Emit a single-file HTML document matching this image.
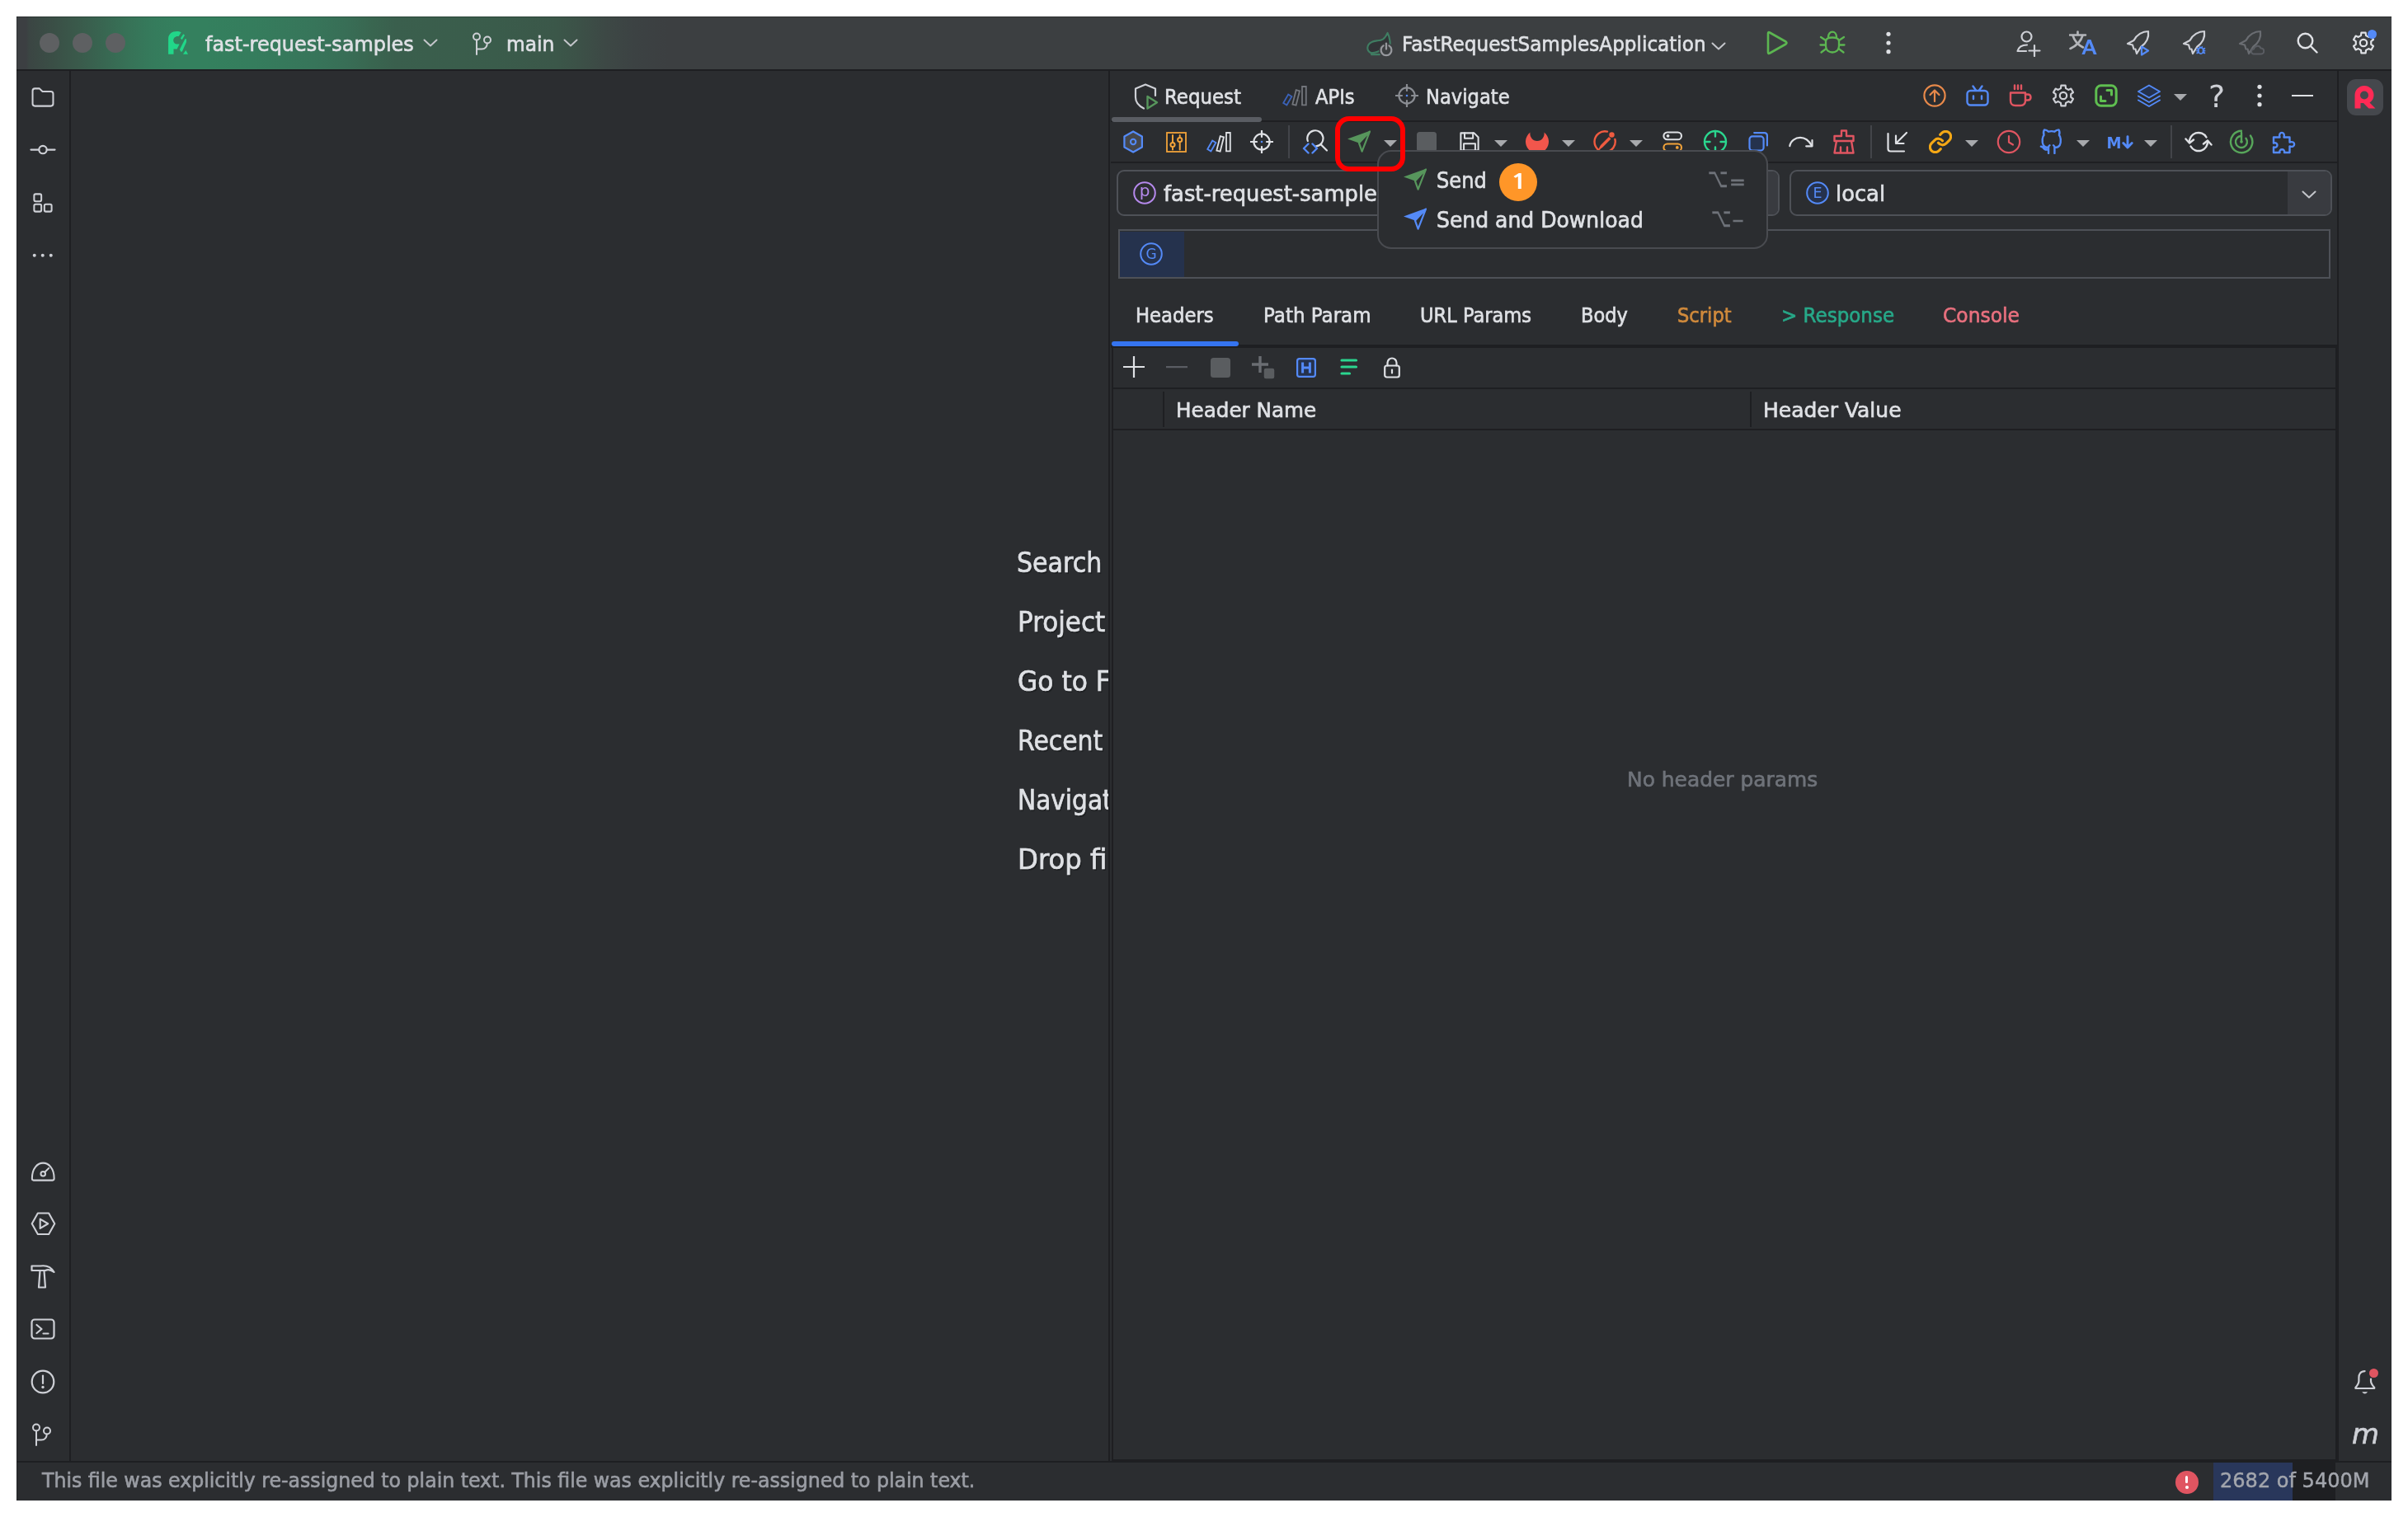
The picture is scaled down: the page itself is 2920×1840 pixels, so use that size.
<!DOCTYPE html>
<html lang="en"><head><meta charset="utf-8"><title>fast-request-samples</title>
<style>
html,body{margin:0;padding:0;background:#fff;}
body{width:2920px;height:1840px;position:relative;overflow:hidden;font-family:"DejaVu Sans","Liberation Sans",sans-serif;}
#win{will-change:transform;position:absolute;left:0;top:0;width:2920px;height:1840px;}
#win:before{content:"";position:absolute;left:20px;top:20px;width:2880px;height:1800px;background:#2b2d30;}
#win>*{position:absolute;left:0;top:0;}
#win div,#win svg,#win span{position:absolute;}
#title{left:20px;top:20px;width:2880px;height:64px;background:linear-gradient(90deg,#3c3f42 0px,#3c3f42 12px,#3b4543 15px,#3a4f46 45px,#3a5a4b 75px,#386651 105px,#377257 135px,#357b5c 165px,#34805e 195px,#34805e 230px,#357d5d 285px,#37755a 360px,#386e56 400px,#396650 430px,#3a5f4d 460px,#3a5c4b 580px,#3b5749 655px,#3c5047 685px,#3d4845 715px,#3c4243 750px,#3c3f41 790px,#3c3f41 100%);}
.t{-webkit-text-stroke:0.65px;white-space:nowrap;transform-origin:0 0;line-height:normal;}
#hints{left:86px;top:86px;width:1258px;height:1686px;overflow:hidden;}
.combo{border:2px solid #4e5157;border-radius:9px;box-sizing:border-box;overflow:hidden;}
.cbtn{right:0;top:0;height:100%;background:#393b40;}
#popup{left:1670px;top:182px;width:473.5px;height:120px;background:#2b2d30;border:2px solid #494b50;border-radius:17px;box-sizing:border-box;}
</style></head>
<body>
<div id="win">
<header id="titlebar">
<div id="title"></div>
<div style="left:20px;top:84px;width:2880px;height:2px;background:#1e1f22;"></div>
<div style="left:20px;top:20px;width:2880px;height:1px;background:rgba(0,0,0,.28);"></div>
<div style="left:20px;top:20px;width:1px;height:1800px;background:rgba(0,0,0,.22);"></div>
<div style="left:48px;top:40px;width:24px;height:24px;background:#5e6062;border-radius:50%;"></div>
<div style="left:88px;top:40px;width:24px;height:24px;background:#5e6062;border-radius:50%;"></div>
<div style="left:128px;top:40px;width:24px;height:24px;background:#5e6062;border-radius:50%;"></div>
<svg style="left:204.00px;top:38.20px;" width="24" height="28" viewBox="0 0 24 28"><g fill="#21d789" transform="translate(0 0.3)"><path d="M0.1 27.4 L0.1 9 C0.1 3 4.5 -0.2 10.5 -0.2 C12.5 -0.2 14.3 0.3 15.7 1 L12.7 5.8 C9 5 6.2 7.8 6.2 10.8 C6.2 13.5 8.2 15.3 10.6 15.3 L13.6 15.3 L10.6 21.2 L6.5 21.2 L6.5 27.4 Z"/><path d="M18.3 2.9 L20 4.4 L16.7 9.9 L14.9 8.3 Z"/><path d="M20.4 9 L22 8.9 L22 12.6 L16.9 24.2 L15.4 24.5 L13.9 21.8 Z"/><path d="M21.3 22.7 L24 27.4 L18 27.4 Z"/></g></svg>
<span class="t" style="left:248.93px;top:38.3px;font-size:25.5px;color:#dfe1e5;transform:scaleX(0.9389);">fast-request-samples</span>
<svg style="left:513.00px;top:47.00px;" width="18" height="10" viewBox="0 0 18 10"><path fill="none" stroke="#c4c6cb" stroke-width="2" stroke-linecap="round" stroke-linejoin="round"  d="M1.5 1.5 L9 8.5 L16.5 1.5"/></svg>
<svg style="left:573.00px;top:39.00px;" width="24" height="28" viewBox="0 0 24 28"><g fill="none" stroke="#ced0d6" stroke-width="2" stroke-linecap="round" stroke-linejoin="round" ><circle cx="5" cy="5.5" r="4"/><circle cx="18" cy="9.5" r="4"/><path d="M5 9.5 V27 M5 20.5 H11 Q17.5 20.5 17.8 13.5"/></g></svg>
<span class="t" style="left:614.04px;top:37.7px;font-size:25.5px;color:#dfe1e5;transform:scaleX(0.9139);">main</span>
<svg style="left:683.40px;top:47.00px;" width="18" height="10" viewBox="0 0 18 10"><path fill="none" stroke="#c4c6cb" stroke-width="2" stroke-linecap="round" stroke-linejoin="round"  d="M1.5 1.5 L9 8.5 L16.5 1.5"/></svg>
<svg style="left:1656.00px;top:37.00px;" width="34" height="32" viewBox="0 0 34 32"><g transform="translate(0.3 1)"><path fill="#313437" stroke="#3f7d62" stroke-width="2.1" stroke-linecap="round" stroke-linejoin="round"  d="M26.3 1.9 C25 5 23 8 20.7 9.6 C18 11.2 15 11.2 13.3 11.4 C10 11.8 8 12.5 6.8 13.2 C4 14.5 2.3 17 2 19.7 C1.8 22.5 3.5 25 6.5 26.3 C12 26 17 24 20 21 L29.3 15.5 C29.4 13 29.3 12 29 10.8 C28.5 7 27.5 4 26.3 1.9 Z"/><path fill="none" stroke="#3f7d62" stroke-width="2.1" stroke-linecap="round" stroke-linejoin="round"  d="M6.5 26.3 L6.8 28.1 H16.8"/></g><circle cx="25" cy="24" r="9" fill="#3c3f41"/><g fill="none" stroke="#97999e" stroke-width="2.2" stroke-linecap="round" stroke-linejoin="round"  stroke-linecap="butt"><path d="M21.6 18.4 A6.4 6.4 0 1 0 28.4 18.4"/><path d="M25 15.6 V22.6"/></g></svg>
<span class="t" style="left:1700.13px;top:38.3px;font-size:25.5px;color:#dfe1e5;transform:scaleX(0.9075);">FastRequestSamplesApplication</span>
<svg style="left:2075.00px;top:51.00px;" width="18" height="10" viewBox="0 0 18 10"><path fill="none" stroke="#c4c6cb" stroke-width="2" stroke-linecap="round" stroke-linejoin="round"  d="M1.5 1.5 L9 8.5 L16.5 1.5"/></svg>
<svg style="left:2141.00px;top:37.00px;" width="28" height="30" viewBox="0 0 28 30"><path fill="none" stroke="#5cb651" stroke-width="2.6" stroke-linecap="round" stroke-linejoin="round"  d="M3 3.5 Q3 1.5 5 2.5 L24.5 13.5 Q26.5 15 24.5 16.5 L5 27.5 Q3 28.5 3 26.5 Z"/></svg>
<svg style="left:2206.00px;top:36.00px;" width="32" height="30" viewBox="0 0 32 30"><g fill="none" stroke="#5cb651" stroke-width="2.3" stroke-linecap="round" stroke-linejoin="round" ><path d="M8 14 C8 8 24 8 24 14 V20 C24 30 8 30 8 20 Z"/><path d="M11 9 C11 0.5 21 0.5 21 9"/><path d="M8 13 L2 9 M24 13 L30 9 M8 18.5 H1.5 M24 18.5 H30.5 M8.5 23 L2.5 27.5 M23.5 23 L29.5 27.5"/></g></svg>
<svg style="left:2286.00px;top:37.00px;" width="8" height="30" viewBox="0 0 8 30"><g fill="#dfe1e5"><circle cx="4" cy="4.3" r="2.6"/><circle cx="4" cy="15" r="2.6"/><circle cx="4" cy="25.7" r="2.6"/></g></svg>
<svg style="left:2445.00px;top:37.00px;" width="30" height="32" viewBox="0 0 30 32"><g fill="none" stroke="#ced0d6" stroke-width="2.2" stroke-linecap="round" stroke-linejoin="round" ><circle cx="12.5" cy="7.5" r="6"/><path d="M1.5 25 C3 19 8 17.5 13 17.5 M1.5 25 H12"/><path d="M22 18 V31 M15.5 24.5 H28.5"/></g></svg>
<svg style="left:2509.00px;top:37.00px;" width="34" height="30" viewBox="0 0 34 30"><g fill="none" stroke="#b4b6ba" stroke-width="2.6" stroke-linecap="round" stroke-linejoin="round" ><path d="M1 5.5 H20 M10.5 1.5 V5.5 M4.5 6 C7 14 12 18 17 20.5 M16.5 6 C14 14 8 19 1.5 22"/></g><path fill="#548af7" d="M22.6 11 h3.8 l7.2 18 h-3.8 l-1.6 -4.2 h-7.6 l-1.6 4.2 h-3.6 Z M24.4 15 l-2.7 7 h5.4 Z"/></svg>
<svg style="left:2578.00px;top:36.00px;" width="30" height="32" viewBox="0 0 30 32"><path fill="none" stroke="#ced0d6" stroke-width="2.2" stroke-linecap="round" stroke-linejoin="round"  d="M27 2 C20 2 13 6 9.5 13 L2 17 L8 18.5 L9.5 23.5 M27 2 C28 9 25 16 18 21 L13 29 L11.5 23.5"/><path fill="none" stroke="#548af7" stroke-width="2.2" stroke-linecap="round" stroke-linejoin="round"  d="M19 20.5 L27 25.5 L19 30.5 Z"/></svg>
<svg style="left:2646.00px;top:36.00px;" width="30" height="32" viewBox="0 0 30 32"><path fill="none" stroke="#ced0d6" stroke-width="2.2" stroke-linecap="round" stroke-linejoin="round"  d="M27 2 C20 2 13 6 9.5 13 L2 17 L8 18.5 L9.5 23.5 M27 2 C28 9 25 16 18 21 L13 29 L11.5 23.5"/><g fill="none" stroke="#548af7" stroke-width="1.8" stroke-linecap="round" stroke-linejoin="round" ><ellipse cx="22.8" cy="25.4" rx="2.9" ry="3.7" fill="#3c3f41"/><path d="M18.2 22.8 L19.8 23.6 M18 25.6 H19.6 M18.2 28.4 L19.8 27.6 M27.4 22.8 L25.8 23.6 M27.6 25.6 H26 M27.4 28.4 L25.8 27.6 M21.3 21 L22 21.8 M24.3 21 L23.6 21.8"/></g></svg>
<svg style="left:2714.00px;top:36.00px;" width="32" height="32" viewBox="0 0 32 32"><path fill="none" stroke="#6a6d72" stroke-width="2.2" stroke-linecap="round" stroke-linejoin="round"  d="M27 2 C20 2 13 6 9.5 13 L2 17 L8 18.5 L9.5 23.5 M27 2 C28 9 25 16 18 21 L13 29 L11.5 23.5"/><path fill="none" stroke="#5a5d63" stroke-width="2" stroke-linecap="round" stroke-linejoin="round"  fill="#4a4d52" d="M19 29.5 H28 A3.5 3.5 0 0 0 27.5 22.5 A4.5 4.5 0 0 0 19 23.5 A3 3 0 0 0 19 29.5 Z"/></svg>
<svg style="left:2785.00px;top:39.00px;" width="26" height="26" viewBox="0 0 26 26"><g fill="none" stroke="#dfe1e5" stroke-width="2.4" stroke-linecap="round" stroke-linejoin="round" ><circle cx="10.5" cy="10.5" r="8.8"/><path d="M17 17 L24.5 24.5"/></g></svg>
<svg style="left:2852.00px;top:38.00px;" width="28" height="28" viewBox="0 0 28 28"><g fill="none" stroke="#dfe1e5" stroke-width="2.2" stroke-linecap="round" stroke-linejoin="round" ><path d="M17.06 5.11 L16.62 1.68 L11.38 1.68 L10.94 5.11 L7.83 6.91 L4.64 5.57 L2.02 10.11 L4.77 12.21 L4.77 15.79 L2.02 17.89 L4.64 22.43 L7.83 21.09 L10.94 22.89 L11.38 26.32 L16.62 26.32 L17.06 22.89 L20.17 21.09 L23.36 22.43 L25.98 17.89 L23.23 15.79 L23.23 12.21 L25.98 10.11 L23.36 5.57 L20.17 6.91 Z"/><circle cx="14" cy="14" r="4.2"/></g></svg>
<div style="left:2870.7px;top:36.3px;width:11px;height:11px;background:#548af7;border-radius:50%;"></div>
</header>
<nav id="left-stripe">
<div style="left:84px;top:86px;width:2px;height:1686px;background:#1e1f22;"></div>
<svg style="left:38.00px;top:106.00px;" width="28" height="24" viewBox="0 0 30 26"><path fill="none" stroke="#ced0d6" stroke-width="2.2" stroke-linecap="round" stroke-linejoin="round"  d="M1.5 4.5 Q1.5 1.5 4.5 1.5 H10.5 L14.5 5.5 H25.5 Q28.5 5.5 28.5 8.5 V21.5 Q28.5 24.5 25.5 24.5 H4.5 Q1.5 24.5 1.5 21.5 Z"/></svg>
<svg style="left:36.00px;top:175.40px;" width="32" height="13.2" viewBox="0 0 34 14"><g fill="none" stroke="#ced0d6" stroke-width="2.2" stroke-linecap="round" stroke-linejoin="round" ><circle cx="17" cy="7" r="5"/><path d="M1.5 7 H12 M22 7 H32.5"/></g></svg>
<svg style="left:40.00px;top:234.00px;" width="24" height="24" viewBox="0 0 26 26"><g fill="none" stroke="#ced0d6" stroke-width="2.2" stroke-linecap="round" stroke-linejoin="round" ><rect x="1.5" y="1.5" width="9.5" height="9.5" rx="2"/><rect x="1.5" y="15" width="9.5" height="9.5" rx="2"/><rect x="15" y="15" width="9.5" height="9.5" rx="2"/></g></svg>
<svg style="left:39.25px;top:307.25px;" width="25.5" height="5.5" viewBox="0 0 28 6"><g fill="#ced0d6"><circle cx="3" cy="3" r="2.2"/><circle cx="14" cy="3" r="2.2"/><circle cx="25" cy="3" r="2.2"/></g></svg>
<svg style="left:36.75px;top:1408.50px;" width="30.5" height="24" viewBox="0 0 32 26"><g fill="none" stroke="#ced0d6" stroke-width="2.2" stroke-linecap="round" stroke-linejoin="round" ><path d="M3.5 24.5 H28.5 Q30.5 24.5 30.5 22 C30.5 -5 1.5 -5 1.5 22 Q1.5 24.5 3.5 24.5 Z"/><circle cx="16" cy="16" r="3"/><path d="M18.2 13.8 L23.5 8.5"/></g></svg>
<svg style="left:36.50px;top:1469.75px;" width="31" height="28.5" viewBox="0 0 32 30"><g fill="none" stroke="#ced0d6" stroke-width="2.2" stroke-linecap="round" stroke-linejoin="round" ><path d="M9 1.5 H23 L30.5 15 L23 28.5 H9 L1.5 15 Z"/><path d="M12 9 L22 15 L12 21 Z"/></g></svg>
<svg style="left:37.00px;top:1533.00px;" width="30" height="30" viewBox="0 0 30 30"><g fill="none" stroke="#ced0d6" stroke-width="2.2" stroke-linecap="round" stroke-linejoin="round" ><path d="M1.5 2.5 H12 C19 1.5 25 3.5 28.5 10 C24 6.5 20 7 18 8 H1.5 Z"/><path d="M11.5 8.5 L10 28.5 H18 L16.5 8.5"/></g></svg>
<svg style="left:37.00px;top:1599.00px;" width="30" height="26" viewBox="0 0 30 26"><g fill="none" stroke="#ced0d6" stroke-width="2.2" stroke-linecap="round" stroke-linejoin="round" ><rect x="1.5" y="1.5" width="27" height="23" rx="3.5"/><path d="M7.5 8 L13.5 13 L7.5 18 M15.5 18.5 H21.5"/></g></svg>
<svg style="left:37.00px;top:1661.00px;" width="30" height="30" viewBox="0 0 30 30"><g fill="none" stroke="#ced0d6" stroke-width="2.2" stroke-linecap="round" stroke-linejoin="round" ><circle cx="15" cy="15" r="13.3"/><path d="M15 7.5 V17"/></g><circle cx="15" cy="21.5" r="1.7" fill="#ced0d6"/></svg>
<svg style="left:39.00px;top:1726.00px;" width="24" height="28" viewBox="0 0 24 28"><g fill="none" stroke="#ced0d6" stroke-width="2" stroke-linecap="round" stroke-linejoin="round" ><circle cx="5" cy="5.5" r="4"/><circle cx="18" cy="9.5" r="4"/><path d="M5 9.5 V27 M5 20.5 H11 Q17.5 20.5 17.8 13.5"/></g></svg>
</nav>
<main id="editor">
<div id="hints">
<span class="t" style="left:1147.35px;top:577.3px;font-size:33px;-webkit-text-stroke:0.7px;color:#dfe1e5;transform:scaleX(0.9118);text-shadow:1.5px 1.5px 0 rgba(20,21,23,.55)">Search Everywhere</span>
<span class="t" style="left:1148.15px;top:649.3px;font-size:33px;-webkit-text-stroke:0.7px;color:#dfe1e5;transform:scaleX(0.9398);text-shadow:1.5px 1.5px 0 rgba(20,21,23,.55)">Project View</span>
<span class="t" style="left:1148.04px;top:721.3px;font-size:33px;-webkit-text-stroke:0.7px;color:#dfe1e5;transform:scaleX(0.9493);text-shadow:1.5px 1.5px 0 rgba(20,21,23,.55)">Go to File</span>
<span class="t" style="left:1148.06px;top:793.3px;font-size:33px;-webkit-text-stroke:0.7px;color:#dfe1e5;transform:scaleX(0.9055);text-shadow:1.5px 1.5px 0 rgba(20,21,23,.55)">Recent Files</span>
<span class="t" style="left:1148.08px;top:865.3px;font-size:33px;-webkit-text-stroke:0.7px;color:#dfe1e5;transform:scaleX(0.8977);text-shadow:1.5px 1.5px 0 rgba(20,21,23,.55)">Navigation Bar</span>
<span class="t" style="left:1147.82px;top:937.3px;font-size:33px;-webkit-text-stroke:0.7px;color:#dfe1e5;transform:scaleX(0.9794);text-shadow:1.5px 1.5px 0 rgba(20,21,23,.55)">Drop files here to open them</span>
</div>
</main>
<section id="tool-window">
<div style="left:1344px;top:86px;width:2px;height:1686px;background:#1e1f22;"></div>
<svg style="left:1374.50px;top:100.50px;" width="30" height="32" viewBox="0 0 30 32"><path fill="none" stroke="#ced0d6" stroke-width="2.2" stroke-linecap="round" stroke-linejoin="round"  d="M26 15 V6.5 L14 1.5 L2 6.5 V17 C2 23 6 27.5 12 30.5"/><path fill="none" stroke="#57965c" stroke-width="2.4" stroke-linecap="round" stroke-linejoin="round"  fill="#1f3324" d="M16.5 16 L28 23.2 L16.5 30.5 Z"/></svg>
<span class="t" style="left:1412.16px;top:102.4px;font-size:25.5px;color:#dfe1e5;transform:scaleX(0.8970);">Request</span>
<svg style="left:1555.00px;top:103.50px;" width="30" height="25" viewBox="0 0 30 25"><g fill="none" stroke-width="1.8" stroke-linejoin="miter"><path stroke="#3b62b8" d="M1.2 21 L7.2 10.6 L11.4 13 L5.4 23.4 Z"/><path stroke="#73767c" d="M12.3 22.6 L16.7 5.2 L21 6.3 L16.6 23.7 Z"/><path stroke="#73767c" d="M24 1 H28.8 V23.4 H24 Z"/></g></svg>
<span class="t" style="left:1594.68px;top:102.4px;font-size:25.5px;color:#dfe1e5;transform:scaleX(0.8875);">APIs</span>
<svg style="left:1692.00px;top:102.00px;" width="28" height="28" viewBox="0 0 28 28"><g fill="none" stroke="#8a8d93" stroke-width="2.2" stroke-linecap="round" stroke-linejoin="round"  stroke-linecap="butt"><circle cx="14" cy="14" r="9.6"/><path d="M14 0.5 V8 M14 20 V27.5 M0.5 14 H8 M20 14 H27.5"/></g><circle cx="14" cy="14" r="1.3" fill="#548af7"/></svg>
<span class="t" style="left:1729.18px;top:102.4px;font-size:25.5px;color:#dfe1e5;transform:scaleX(0.8882);">Navigate</span>
<div style="left:1347px;top:146px;width:1487px;height:2px;background:#1e1f22;"></div>
<div style="left:1348px;top:142px;width:182px;height:6px;background:#5a5d63;border-radius:3px;"></div>
<svg style="left:2332.00px;top:102.00px;" width="28" height="28" viewBox="0 0 28 28"><g fill="none" stroke="#e8894a" stroke-width="2.2" stroke-linecap="round" stroke-linejoin="round" ><circle cx="14" cy="14" r="12.6"/><path d="M14 21 V8 M8.5 13 L14 7.5 L19.5 13"/></g></svg>
<svg style="left:2384.00px;top:103.00px;" width="28" height="26" viewBox="0 0 28 26"><g fill="none" stroke="#548af7" stroke-width="2.4" stroke-linecap="round" stroke-linejoin="round" ><rect x="1.5" y="7" width="25" height="17.5" rx="4"/><path d="M8.5 1.5 L12 6.5 M19.5 1.5 L16 6.5"/><path d="M9 13.5 V17 M19 13.5 V17"/></g></svg>
<svg style="left:2436.00px;top:102.00px;" width="28" height="28" viewBox="0 0 28 28"><g fill="none" stroke="#e05561" stroke-width="2.4" stroke-linecap="round" stroke-linejoin="round" ><path d="M2 10.5 H20 V20 Q20 26 14 26 H8 Q2 26 2 20 Z"/><path d="M20 12.5 H23 Q26.5 12.5 26.5 16 Q26.5 19.5 23 19.5 H20"/><path d="M7 1.5 V6 M11 1.5 V6 M15 1.5 V6"/></g></svg>
<svg style="left:2488.00px;top:102.00px;" width="28" height="28" viewBox="0 0 28 28"><g fill="none" stroke="#ced0d6" stroke-width="2.2" stroke-linecap="round" stroke-linejoin="round" ><path d="M17.06 5.11 L16.62 1.68 L11.38 1.68 L10.94 5.11 L7.83 6.91 L4.64 5.57 L2.02 10.11 L4.77 12.21 L4.77 15.79 L2.02 17.89 L4.64 22.43 L7.83 21.09 L10.94 22.89 L11.38 26.32 L16.62 26.32 L17.06 22.89 L20.17 21.09 L23.36 22.43 L25.98 17.89 L23.23 15.79 L23.23 12.21 L25.98 10.11 L23.36 5.57 L20.17 6.91 Z"/><circle cx="14" cy="14" r="4.2"/></g></svg>
<svg style="left:2540.00px;top:102.00px;" width="28" height="28" viewBox="0 0 28 28"><g fill="none" stroke="#5fbf50" stroke-width="3" stroke-linecap="round" stroke-linejoin="round" ><rect x="1.8" y="1.8" width="24.4" height="24.4" rx="6"/><path d="M15 7.5 H20.5 V13 M13 20.5 H7.5 V15"/></g></svg>
<svg style="left:2592.00px;top:102.00px;" width="28" height="28" viewBox="0 0 28 28"><g fill="none" stroke="#548af7" stroke-width="2" stroke-linecap="round" stroke-linejoin="round"  stroke-linejoin="miter"><path fill="#25324d" d="M14 1.5 L27 9 L14 16.5 L1 9 Z"/><path d="M1 14.5 L14 22 L27 14.5"/><path d="M1 19.5 L14 27 L27 19.5"/></g></svg>
<svg style="left:2636.00px;top:114.00px;" width="16" height="8" viewBox="0 0 16 8"><path fill="#a8aaad" d="M0 0 H16 L8 8 Z"/></svg>
<svg style="left:2677.00px;top:100.00px;" width="22" height="32" viewBox="0 0 22 32"><text x="11" y="29.5" text-anchor="middle" font-family="DejaVu Sans,sans-serif" font-size="38" fill="#ced0d6">?</text></svg>
<svg style="left:2736.00px;top:101.00px;" width="8" height="30" viewBox="0 0 8 30"><g fill="#dfe1e5"><circle cx="4" cy="4.3" r="2.6"/><circle cx="4" cy="15" r="2.6"/><circle cx="4" cy="25.7" r="2.6"/></g></svg>
<div style="left:2779px;top:115px;width:26px;height:2px;background:#dfe1e5;"></div>
<svg style="left:1361.85px;top:158.00px;" width="24.3" height="28" viewBox="0 0 26 30"><path fill="#45474c" stroke="#548af7" stroke-width="2.4" stroke-linejoin="round" d="M13 1.5 L24.5 8 V22 L13 28.5 L1.5 22 V8 Z"/><circle cx="13" cy="15" r="3.4" fill="none" stroke="#548af7" stroke-width="2.2"/></svg>
<svg style="left:1413.50px;top:159.50px;" width="25" height="25" viewBox="0 0 25 25"><rect x="1" y="1" width="23" height="23" fill="#26282b" stroke="#f2a33a" stroke-width="1.8"/><g fill="none" stroke="#f2a33a" stroke-width="2" stroke-linecap="round" stroke-linejoin="round" ><path d="M8 4 V12.5 M8 18.5 V21.5 M16.7 4 V6.5 M16.7 12.5 V21.5"/><circle cx="8" cy="15.5" r="2.6"/><circle cx="16.7" cy="9.5" r="2.6"/></g></svg>
<svg style="left:1463.00px;top:159.50px;" width="30" height="25" viewBox="0 0 30 25"><g fill="none" stroke-width="1.8" stroke-linejoin="miter"><path stroke="#548af7" d="M1.2 21 L7.2 10.6 L11.4 13 L5.4 23.4 Z"/><path stroke="#dfe1e5" d="M12.3 22.6 L16.7 5.2 L21 6.3 L16.6 23.7 Z"/><path stroke="#dfe1e5" d="M24 1 H28.8 V23.4 H24 Z"/></g></svg>
<svg style="left:1516.00px;top:158.00px;" width="28" height="28" viewBox="0 0 28 28"><g fill="none" stroke="#dfe1e5" stroke-width="2.2" stroke-linecap="round" stroke-linejoin="round"  stroke-linecap="butt"><circle cx="14" cy="14" r="9.6"/><path d="M14 0.5 V8 M14 20 V27.5 M0.5 14 H8 M20 14 H27.5"/></g><circle cx="14" cy="14" r="1.3" fill="#548af7"/></svg>
<svg style="left:1579.00px;top:157.00px;" width="32" height="30" viewBox="0 0 32 30"><g fill="none" stroke="#dfe1e5" stroke-width="2.2" stroke-linecap="round" stroke-linejoin="round" ><path d="M6.8 14 A9.6 9.6 0 1 1 17 20.4"/><path d="M22.5 18 L30 25.5"/></g><g fill="none" stroke="#548af7" stroke-width="2.4" stroke-linecap="round" stroke-linejoin="round"  stroke-linejoin="miter" stroke-linecap="butt"><path d="M7.5 17.5 L2 23 L7.5 28.5"/><path d="M12.5 17.5 L18 23 L12.5 28.5"/></g></svg>
<svg style="left:1634.00px;top:158.00px;" width="28" height="28" viewBox="0 0 28 28"><path fill="#57965c" d="M27.7 0.4 L0 10.4 L14 15.6 Z"/><path fill="none" stroke="#57965c" stroke-width="2.2" stroke-linecap="round" stroke-linejoin="round"  stroke-linejoin="miter" d="M27 1.6 L14 15.6 L17.6 25.6 Z"/></svg>
<svg style="left:1718.00px;top:160.00px;" width="24" height="24" viewBox="0 0 24 24"><rect width="24" height="24" rx="3.5" fill="#5a5d60"/></svg>
<svg style="left:1770.00px;top:160.00px;" width="24" height="24" viewBox="0 0 26 26"><g fill="none" stroke="#dfe1e5" stroke-width="2.2" stroke-linecap="round" stroke-linejoin="round"  stroke-linejoin="miter"><path d="M1.5 1.5 H19 L24.5 7 V24.5 H1.5 Z"/><path d="M6.5 1.5 V8.5 H17.5 V1.5"/><path d="M5.5 24.5 V15.5 H20.5 V24.5"/></g></svg>
<svg style="left:1850.00px;top:158.00px;" width="28" height="28" viewBox="0 0 28 28"><path fill="#f2564c" d="M5.6 2.6 A14 14 0 1 0 22.4 2.6 A8.6 8.6 0 1 1 5.6 2.6 Z"/></svg>
<svg style="left:1932.00px;top:158.00px;" width="28" height="28" viewBox="0 0 28 28"><g fill="none" stroke="#ef5b40" stroke-width="2.4" stroke-linecap="round" stroke-linejoin="round" ><path d="M17 1.6 A12.6 12.6 0 1 0 26.4 11"/></g><path fill="#ef5b40" d="M5 25.5 L9 18 L19 8 L21.5 10.5 L11.5 20.5 Z"/><circle cx="22.5" cy="5.5" r="3.2" fill="#ef5b40"/></svg>
<svg style="left:2015.80px;top:158.85px;" width="24.4" height="26.3" viewBox="0 0 26 28"><g fill="none" stroke="#dfe1e5" stroke-width="2.2" stroke-linecap="round" stroke-linejoin="round" ><rect x="1.5" y="1.5" width="23" height="9.5" rx="4.75"/></g><circle cx="7" cy="6.2" r="2" fill="#dfe1e5"/><g fill="none" stroke="#f2a33a" stroke-width="2.2" stroke-linecap="round" stroke-linejoin="round" ><rect x="1.5" y="16.5" width="23" height="9.5" rx="4.75"/></g><circle cx="19" cy="21.2" r="2" fill="#f2a33a"/></svg>
<svg style="left:2065.00px;top:157.00px;" width="30" height="30" viewBox="0 0 30 30"><g fill="none" stroke="#2bd68f" stroke-width="2.4" stroke-linecap="round" stroke-linejoin="round"  stroke-linecap="butt"><circle cx="15" cy="15" r="13"/><path d="M15 2 V8.5 M15 21.5 V28 M2 15 H8.5 M21.5 15 H28"/></g></svg>
<svg style="left:2120.00px;top:160.00px;" width="24" height="24" viewBox="0 0 24 24"><g fill="none" stroke="#548af7" stroke-width="2.2" stroke-linecap="round" stroke-linejoin="round" ><path d="M7.2 1.1 H19.4 Q22.9 1.1 22.9 4.6 V16.4"/><rect x="1.5" y="5.4" width="17.1" height="17.1" rx="3.6" fill="#25324d"/></g></svg>
<svg style="left:2169.00px;top:162.00px;" width="30" height="20" viewBox="0 0 30 20"><g fill="none" stroke="#dfe1e5" stroke-width="2.2" stroke-linecap="round" stroke-linejoin="round" ><path d="M1.3 15.2 C2.2 8.5 8.5 4.9 14 4.9 C19.5 4.9 24.5 8.5 28 14.8"/><path d="M28.5 8.2 V15.3 H21.2"/></g></svg>
<svg style="left:2223.00px;top:157.00px;" width="26" height="30" viewBox="0 0 26 30"><g fill="none" stroke="#e05561" stroke-width="2.4" stroke-linecap="round" stroke-linejoin="round"  stroke-linejoin="miter"><path d="M10 1.5 H16 V8 H24.5 V14 H1.5 V8 H10 Z"/><path d="M4 14 L1.5 28.5 H24.5 L22 14"/><path d="M9 28 V21.5 M17 28 V21.5"/></g></svg>
<svg style="left:2288.00px;top:159.00px;" width="26" height="26" viewBox="0 0 26 26"><g fill="none" stroke="#dfe1e5" stroke-width="2.2" stroke-linecap="round" stroke-linejoin="round" ><path d="M1.5 3 V21.5 Q1.5 24.5 4.5 24.5 H21"/><path d="M24 2 L11 15 M11 5.5 V15 H20.5"/></g></svg>
<svg style="left:2339.00px;top:158.00px;" width="28" height="28" viewBox="1 1 22 22"><g fill="none" stroke="#f5a815" stroke-width="2.45" stroke-linecap="round" stroke-linejoin="round" ><path d="M10 13a5 5 0 0 0 7.54.54l3-3a5 5 0 0 0-7.07-7.07l-1.72 1.71"/><path d="M14 11a5 5 0 0 0-7.54-.54l-3 3a5 5 0 0 0 7.07 7.07l1.71-1.71"/></g></svg>
<svg style="left:2421.00px;top:157.00px;" width="30" height="30" viewBox="0 0 30 30"><g fill="none" stroke="#e05561" stroke-width="2.2" stroke-linecap="round" stroke-linejoin="round" ><circle cx="15" cy="15" r="13.2"/><path d="M15 8 V15.5 L20 18.5"/></g></svg>
<svg style="left:2473.25px;top:156.35px;" width="29.5" height="31.3" viewBox="0 0 32 34"><path fill="none" stroke="#548af7" stroke-width="2.6" stroke-linecap="round" stroke-linejoin="round"  d="M12 32.5 V25 C5 25 3.5 20 4 14 C4.2 11 5 9.5 6 8.5 C5 5.5 5.5 3 6.5 1.5 C9 1.5 11 3 12 4 C14.5 3.3 17.5 3.3 20 4 C21 3 23 1.5 25.5 1.5 C26.5 3 27 5.5 26 8.5 C27 9.5 27.8 11 28 14 C28.5 20 27 25 20 25 V32.5 M12 27.5 C8 28.5 6 27 4.5 24.5 L2 23.5 M12 25 C12 23.5 12.5 22.5 13.5 22 M20 25 C20 23.5 19.5 22.5 18.5 22"/></svg>
<svg style="left:2553.00px;top:162.00px;" width="34" height="20" viewBox="0 0 34 20"><text x="1.6" y="17.9" font-family="DejaVu Sans,sans-serif" font-weight="bold" font-size="19.6" fill="#548af7" textLength="18" lengthAdjust="spacingAndGlyphs">M</text><path fill="none" stroke="#548af7" stroke-width="2.9" stroke-linecap="round" stroke-linejoin="round"  stroke-linecap="butt" stroke-linejoin="miter" d="M27 3.6 V16.5 M21.8 11.6 L27 17 L32.2 11.6"/></svg>
<svg style="left:2649.00px;top:158.00px;" width="34" height="28" viewBox="0 0 34 28"><g fill="none" stroke="#dfe1e5" stroke-width="2.4" stroke-linecap="round" stroke-linejoin="round" ><path d="M6 15 A11 11 0 0 1 26.5 8.5"/><path d="M28 13 A11 11 0 0 1 7.5 19.5"/><path d="M1.5 10.5 L6 15.5 L11 11.5"/><path d="M23 16.5 L28 12.5 L32.5 17.5"/></g></svg>
<svg style="left:2703.00px;top:157.00px;" width="30" height="30" viewBox="0 0 30 30"><g fill="none" stroke="#57a65a" stroke-width="2.4" stroke-linecap="round" stroke-linejoin="round" ><path d="M15 1.8 A13.2 13.2 0 1 0 26 7.5"/><path d="M15 8 A7 7 0 1 0 20.5 10.7"/><path d="M15 4 V15"/></g><circle cx="15" cy="15" r="1.8" fill="#57a65a"/></svg>
<svg style="left:2755.00px;top:157.00px;" width="30" height="30" viewBox="0 0 30 30"><path fill="none" stroke="#548af7" stroke-width="2.4" stroke-linecap="round" stroke-linejoin="round"  d="M2 9.5 H9.5 C7 2 17 2 14.5 9.5 H21.5 V15.5 C29 13 29 23 21.5 20.5 V28 H15 C16.5 23 8 23 9.5 28 H2 V21.5 C8 23.5 8 14.5 2 16.5 Z"/></svg>
<svg style="left:1678.00px;top:170.00px;" width="16" height="8" viewBox="0 0 16 8"><path fill="#a8aaad" d="M0 0 H16 L8 8 Z"/></svg>
<svg style="left:1812.00px;top:170.00px;" width="16" height="8" viewBox="0 0 16 8"><path fill="#a8aaad" d="M0 0 H16 L8 8 Z"/></svg>
<svg style="left:1894.00px;top:170.00px;" width="16" height="8" viewBox="0 0 16 8"><path fill="#a8aaad" d="M0 0 H16 L8 8 Z"/></svg>
<svg style="left:1976.00px;top:170.00px;" width="16" height="8" viewBox="0 0 16 8"><path fill="#a8aaad" d="M0 0 H16 L8 8 Z"/></svg>
<svg style="left:2383.00px;top:170.00px;" width="16" height="8" viewBox="0 0 16 8"><path fill="#a8aaad" d="M0 0 H16 L8 8 Z"/></svg>
<svg style="left:2518.00px;top:170.00px;" width="16" height="8" viewBox="0 0 16 8"><path fill="#a8aaad" d="M0 0 H16 L8 8 Z"/></svg>
<svg style="left:2600.00px;top:170.00px;" width="16" height="8" viewBox="0 0 16 8"><path fill="#a8aaad" d="M0 0 H16 L8 8 Z"/></svg>
<div style="left:1562px;top:152px;width:2px;height:40px;background:#43454a;"></div>
<div style="left:2268px;top:152px;width:2px;height:40px;background:#43454a;"></div>
<div style="left:2632px;top:152px;width:2px;height:40px;background:#43454a;"></div>
<div style="left:1347px;top:196px;width:1487px;height:2px;background:#1e1f22;"></div>
<div class="combo" style="left:1354px;top:206px;width:804px;height:55.5px;"><div class="cbtn" style="width:52px"></div></div>
<svg style="left:1374.00px;top:220.00px;" width="28" height="28" viewBox="0 0 28 28"><circle cx="14" cy="14" r="12.8" fill="none" stroke="#b589ec" stroke-width="2"/><text x="14" y="18.3" text-anchor="middle" font-family="DejaVu Sans,sans-serif" font-size="20" fill="#b589ec">p</text></svg>
<span class="t" style="left:1410.92px;top:219px;font-size:27px;color:#dfe1e5;transform:scaleX(0.9555);">fast-request-samples</span>
<div class="combo" style="left:2170px;top:206px;width:658px;height:55.5px;"><div class="cbtn" style="width:52px"></div></div>
<svg style="left:2190.00px;top:220.00px;" width="28" height="28" viewBox="0 0 28 28"><circle cx="14" cy="14" r="12.8" fill="#25324d" stroke="#548af7" stroke-width="2"/><text x="14" y="20.2" text-anchor="middle" font-family="DejaVu Sans,sans-serif" font-size="17.5" fill="#548af7">E</text></svg>
<span class="t" style="left:2225.51px;top:218.8px;font-size:27px;color:#dfe1e5;transform:scaleX(0.9543);">local</span>
<svg style="left:2791.00px;top:231.00px;" width="18" height="10" viewBox="0 0 18 10"><path fill="none" stroke="#c4c6cb" stroke-width="2" stroke-linecap="round" stroke-linejoin="round"  d="M1.5 1.5 L9 8.5 L16.5 1.5"/></svg>
<div style="left:1356px;top:278px;width:1470px;height:59.5px;border:2px solid #4e5157;box-sizing:border-box;"></div>
<div style="left:1358px;top:280.5px;width:78px;height:55px;background:#25324d;"></div>
<svg style="left:1382.00px;top:294.00px;" width="28" height="28" viewBox="0 0 28 28"><circle cx="14" cy="14" r="12.8" fill="none" stroke="#548af7" stroke-width="2"/><text x="14" y="20.2" text-anchor="middle" font-family="DejaVu Sans,sans-serif" font-size="17" fill="#548af7">G</text></svg>
<span class="t" style="left:1377.27px;top:366.5px;font-size:25.5px;color:#dfe1e5;transform:scaleX(0.8912);">Headers</span>
<span class="t" style="left:1531.65px;top:366.5px;font-size:25.5px;color:#dfe1e5;transform:scaleX(0.9009);">Path Param</span>
<span class="t" style="left:1721.91px;top:366.5px;font-size:25.5px;color:#dfe1e5;transform:scaleX(0.8841);">URL Params</span>
<span class="t" style="left:1917.39px;top:366.5px;font-size:25.5px;color:#dfe1e5;transform:scaleX(0.8844);">Body</span>
<span class="t" style="left:2033.95px;top:366.5px;font-size:25.5px;color:#d08a3c;transform:scaleX(0.8874);">Script</span>
<span class="t" style="left:2160.02px;top:366.5px;font-size:25.5px;color:#27a888;transform:scaleX(0.9019);">&gt; Response</span>
<span class="t" style="left:2356.02px;top:366.5px;font-size:25.5px;color:#e8707e;transform:scaleX(0.9173);">Console</span>
<div style="left:1347px;top:418px;width:1487px;height:4px;background:#1e1f22;"></div>
<div style="left:1348px;top:414px;width:154px;height:6px;background:#3574f0;border-radius:3px;"></div>
<svg style="left:1362.00px;top:432.00px;" width="26" height="26" viewBox="0 0 26 26"><path fill="none" stroke="#dfe1e5" stroke-width="2.2" stroke-linecap="round" stroke-linejoin="round"  stroke-linecap="butt" d="M13 0 V26 M0 13 H26"/></svg>
<svg style="left:1414.00px;top:443.00px;" width="26" height="4" viewBox="0 0 26 4"><rect y="1" width="26" height="2.2" fill="#5a5d63"/></svg>
<svg style="left:1468.00px;top:434.00px;" width="24" height="24" viewBox="0 0 24 24"><rect width="24" height="24" rx="3.5" fill="#5a5d60"/></svg>
<svg style="left:1518.00px;top:432.00px;" width="28" height="28" viewBox="0 0 28 28"><path fill="none" stroke="#6a6d72" stroke-width="3.4" d="M10 0 V20 M0 10 H20"/><rect x="14" y="14" width="14" height="14" rx="3" fill="#5a5d60" stroke="#2b2d30" stroke-width="1.5"/></svg>
<svg style="left:1572.00px;top:434.00px;" width="24" height="24" viewBox="0 0 24 24"><rect x="1.1" y="1.1" width="21.8" height="21.8" rx="2.6" fill="#25324d" stroke="#548af7" stroke-width="2.2"/><path fill="none" stroke="#548af7" stroke-width="3" d="M7.6 5.5 V18.5 M16.4 5.5 V18.5 M7.6 12 H16.4"/></svg>
<svg style="left:1625.00px;top:435.30px;" width="22" height="20" viewBox="0 0 22 20"><g stroke="#2bd68f" stroke-width="3.2" stroke-linecap="round"><path d="M2 2 H19.5 M2 10 H19.5 M2 18 H11.5"/></g></svg>
<svg style="left:1677.00px;top:433.00px;" width="22" height="26" viewBox="0 0 22 26"><g fill="none" stroke="#dfe1e5" stroke-width="2.2" stroke-linecap="round" stroke-linejoin="round" ><rect x="2.2" y="10.5" width="17.6" height="14" rx="2.5"/><path d="M5.5 10.5 V7 A5.5 5.5 0 0 1 16.5 7 V10.5"/><path d="M11 15.5 V19.5"/></g></svg>
<div style="left:1348px;top:421px;width:2px;height:1351px;background:#1e1f22;"></div>
<div style="left:1348px;top:1770px;width:1486px;height:2px;background:#1e1f22;"></div>
<div style="left:1350px;top:470px;width:1484px;height:2px;background:#1e1f22;"></div>
<div style="left:1410px;top:475px;width:2px;height:43px;background:#1e1f22;"></div>
<div style="left:2122px;top:475px;width:2px;height:43px;background:#1e1f22;"></div>
<span class="t" style="left:1425.68px;top:482.2px;font-size:25.5px;color:#dfe1e5;transform:scaleX(0.9663);">Header Name</span>
<span class="t" style="left:2137.65px;top:482.2px;font-size:25.5px;color:#dfe1e5;transform:scaleX(0.9797);">Header Value</span>
<div style="left:1350px;top:520px;width:1484px;height:2px;background:#1e1f22;"></div>
<span class="t" style="left:1973.46px;top:930px;font-size:25.5px;color:#6f737a;transform:scaleX(0.9770);">No header params</span>
<div style="left:2834px;top:86px;width:2px;height:1686px;background:#1e1f22;"></div>
<div style="left:2832px;top:420px;width:2px;height:1352px;background:#1e1f22;"></div>
</section>
<aside id="right-stripe">
<div style="left:2846px;top:96px;width:44px;height:44px;background:#45484d;border-radius:11px;"></div>
<svg style="left:2855.00px;top:104.00px;" width="26" height="28" viewBox="0 0 26 28"><path fill="#ff2a55" fill-rule="evenodd" d="M0.5 27.5 V11.5 A11.5 11.5 0 0 1 23.5 11.5 C23.5 15.5 21.5 18.5 18.5 20.5 L25.5 27.5 H17.5 L11 21 L7.5 21 V27.5 Z M12 6.5 A5 5 0 1 0 12 16.5 A5 5 0 1 0 12 6.5 Z"/></svg>
<svg style="left:2855.30px;top:1662.00px;" width="26" height="30" viewBox="0 0 26 30"><g fill="none" stroke="#ced0d6" stroke-width="2.2" stroke-linecap="round" stroke-linejoin="round" ><path d="M12.6 1.1 C7.5 1.1 5.4 5 5.4 9 V13 C5.4 16 3.5 18.5 1.4 21 V22 H24.2 V21 C22 18.5 20 16 20 13 V10.5"/></g><path fill="#ced0d6" d="M9.2 26.2 H16.1 Q12.6 31 9.2 26.2 Z"/></svg>
<div style="left:2873px;top:1660.3px;width:11px;height:11px;background:#e05561;border-radius:50%;"></div>
<span class="t" style="left:2852.22px;top:1719.5px;font-size:33px;color:#ced0d6;transform:scaleX(1.0243);font-style:italic;">m</span>
</aside>
<footer id="status-bar">
<div style="left:20px;top:1772px;width:2880px;height:2px;background:#1e1f22;"></div>
<span class="t" style="left:50.90px;top:1781px;font-size:25px;color:#9a9da4;transform:scaleX(0.9459);">This file was explicitly re-assigned to plain text. This file was explicitly re-assigned to plain text.</span>
<div style="left:2637.8px;top:1784px;width:28px;height:28px;background:#e05561;border-radius:50%;"></div>
<div style="left:2650.2px;top:1789.8px;width:3.2px;height:9.6px;background:#fff;border-radius:1.6px;"></div>
<div style="left:2649.8px;top:1801.8px;width:4px;height:4px;background:#fff;border-radius:50%;"></div>
<div style="left:2684px;top:1774px;width:96px;height:46px;background:#29375b;"></div>
<div style="left:2780px;top:1774px;width:52px;height:46px;background:#1e1f22;"></div>
<span class="t" style="left:2691.95px;top:1780px;font-size:25.5px;color:#a3a6ad;transform:scaleX(0.9426);-webkit-text-stroke:0.45px;">2682 of 5400M</span>
</footer>
<div id="send-menu">
<div id="popup"></div>
<svg style="left:1702.00px;top:204.00px;" width="28" height="28" viewBox="0 0 28 28"><path fill="#57965c" d="M27.7 0.4 L0 10.4 L14 15.6 Z"/><path fill="none" stroke="#57965c" stroke-width="2.2" stroke-linecap="round" stroke-linejoin="round"  stroke-linejoin="miter" d="M27 1.6 L14 15.6 L17.6 25.6 Z"/></svg>
<span class="t" style="left:1742.04px;top:203.4px;font-size:27px;color:#dfe1e5;transform:scaleX(0.8933);">Send</span>
<div style="left:1818px;top:197.5px;width:46px;height:46px;background:#ff9628;border-radius:50%;"></div>
<span class="t" style="left:1830.79px;top:208.3px;font-size:25px;color:#fff;transform:scaleX(1.4480);font-weight:700;font-family:'NanumGothic',sans-serif;-webkit-text-stroke:0;">1</span>
<span class="t" style="left:2070.62px;top:197.3px;font-size:32px;color:#6f737a;transform:scaleX(0.6703);-webkit-text-stroke:0.3px;">⌥</span>
<span class="t" style="left:2096.55px;top:204.6px;font-size:25.5px;color:#6f737a;transform:scaleX(0.9281);">=</span>
<svg style="left:1702.00px;top:252.00px;" width="28" height="28" viewBox="0 0 28 28"><path fill="#548af7" d="M27.7 0.4 L0 10.4 L14 15.6 Z"/><path fill="none" stroke="#548af7" stroke-width="2.2" stroke-linecap="round" stroke-linejoin="round"  stroke-linejoin="miter" d="M27 1.6 L14 15.6 L17.6 25.6 Z"/></svg>
<span class="t" style="left:1741.98px;top:251.39999999999998px;font-size:27px;color:#dfe1e5;transform:scaleX(0.9284);">Send and Download</span>
<span class="t" style="left:2074.53px;top:245.3px;font-size:32px;color:#6f737a;transform:scaleX(0.6672);-webkit-text-stroke:0.3px;">⌥</span>
<span class="t" style="left:2099.85px;top:251px;font-size:25.5px;color:#6f737a;transform:scaleX(1.6370);">-</span>
<div style="left:1619px;top:140.5px;width:84.5px;height:67.5px;border:6px solid #ff0000;border-radius:17px;box-sizing:border-box;"></div>
</div>
</div>
</body></html>
